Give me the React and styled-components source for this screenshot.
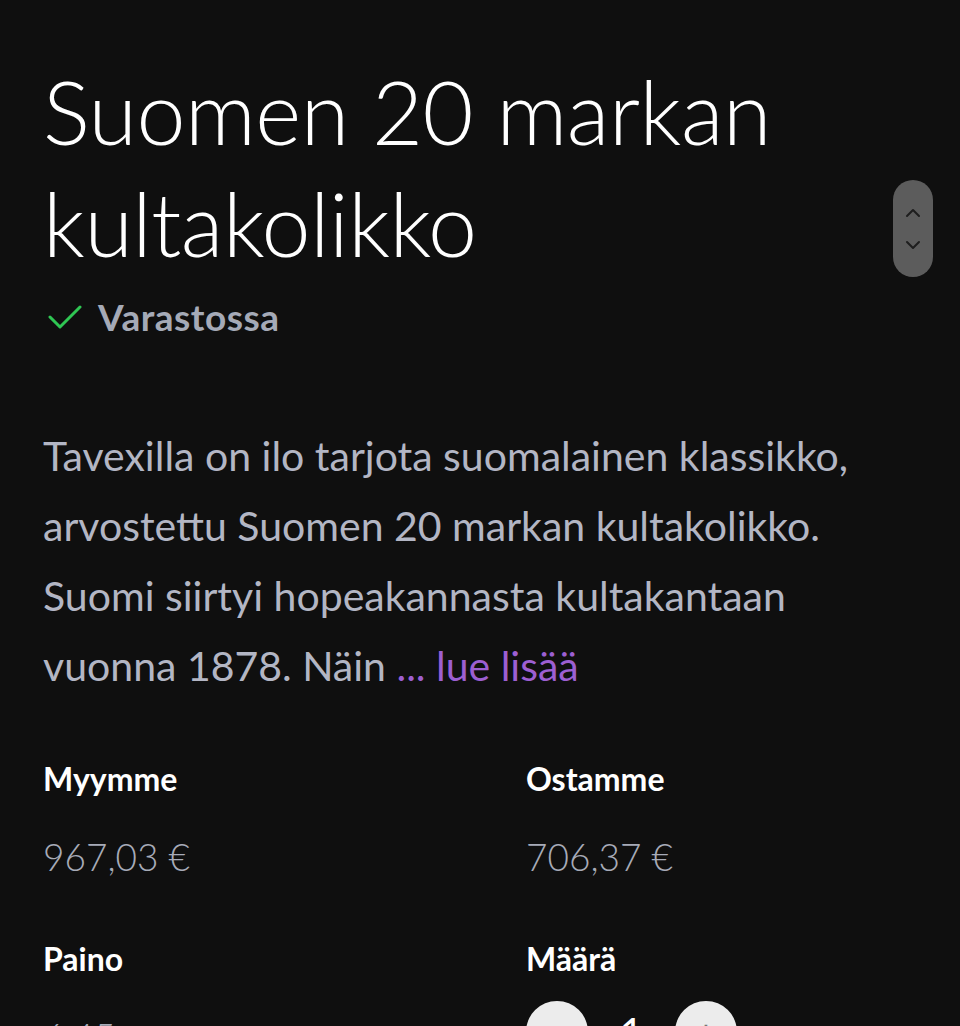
import React from "react";
import styled, { createGlobalStyle } from "styled-components";

const Global = createGlobalStyle`
  html, body { margin: 0; padding: 0; background: #0f0f0f; }
  body { font-family: Lato, "Noto Sans", sans-serif; color: #fff; overflow: hidden; }
`;

const Page = styled.div`
  position: relative;
  width: 960px;
  height: 1026px;
  overflow: hidden;
  background: #0f0f0f;
  box-sizing: border-box;
  padding: 55px 43px 0 43px;
`;

const Title = styled.h1`
  margin: 0;
  font-weight: 300;
  font-size: 88px;
  line-height: 112px;
  color: #ffffff;
  letter-spacing: -0.5px;
`;

const Stock = styled.div`
  display: flex;
  align-items: center;
  gap: 16px;
  margin-top: 16px;
  padding-left: 5px;
  font-size: 37px;
  font-weight: 700;
  letter-spacing: 0.5px;
  color: #a5aab7;
  line-height: 44px;
`;

const Description = styled.p`
  margin: 82px 0 0 0;
  font-size: 41px;
  line-height: 70px;
  font-weight: 400;
  color: #b3b6c4;
`;

const More = styled.span`
  color: #9d5fd2;
`;

const Grid = styled.div`
  display: grid;
  grid-template-columns: 483px 1fr;
  row-gap: 59px;
  margin-top: 58px;
`;

const Cell = styled.div`
  display: flex;
  flex-direction: column;
  gap: ${(p) => (p.$tight ? "22px" : "35px")};
`;

const Label = styled.div`
  font-size: 32px;
  font-weight: 700;
  line-height: 40px;
  color: #ffffff;
`;

const Value = styled.div`
  font-size: 37px;
  font-weight: 300;
  line-height: 46px;
  color: #a7abb8;
`;

const Stepper = styled.div`
  display: flex;
  align-items: center;
`;

const RoundButton = styled.button`
  width: 62px;
  height: 62px;
  border-radius: 50%;
  border: none;
  background: #ececec;
  color: #777;
  font-size: 36px;
  font-family: inherit;
  padding: 0;
  display: flex;
  align-items: center;
  justify-content: center;
`;

const Qty = styled.span`
  width: 87px;
  text-align: center;
  font-size: 40px;
  color: #fff;
`;

const Scroller = styled.div`
  position: absolute;
  left: 893px;
  top: 180px;
  width: 40px;
  height: 97px;
  border-radius: 20px;
  background: #5c5c5c;
  display: flex;
  flex-direction: column;
  align-items: center;
  justify-content: center;
  gap: 22px;
`;

const Chevron = ({ up }) => (
  <svg width="16" height="10" viewBox="0 0 16 10">
    <path
      d={up ? "M2 8 L8 2 L14 8" : "M2 2 L8 8 L14 2"}
      fill="none"
      stroke="#1e1e1e"
      strokeWidth="2"
      strokeLinecap="round"
      strokeLinejoin="round"
    />
  </svg>
);

const Check = () => (
  <svg width="34" height="26" viewBox="0 0 34 26">
    <path d="M2 13 L12 23 L32 3" fill="none" stroke="#2fc653" strokeWidth="3" strokeLinecap="round" strokeLinejoin="round" />
  </svg>
);

export default function App() {
  return (
    <>
      <Global />
      <Page>
        <Title>
          Suomen 20 markan
          <br />
          kultakolikko
        </Title>
        <Stock>
          <Check />
          Varastossa
        </Stock>
        <Description>
          Tavexilla on ilo tarjota suomalainen klassikko, arvostettu Suomen 20 markan kultakolikko.
          Suomi siirtyi hopeakannasta kultakantaan vuonna 1878. Näin <More>... lue lisää</More>
        </Description>
        <Grid>
          <Cell>
            <Label>Myymme</Label>
            <Value>967,03 €</Value>
          </Cell>
          <Cell>
            <Label>Ostamme</Label>
            <Value>706,37 €</Value>
          </Cell>
          <Cell>
            <Label>Paino</Label>
            <Value>6,45 g</Value>
          </Cell>
          <Cell $tight>
            <Label>Määrä</Label>
            <Stepper>
              <RoundButton>−</RoundButton>
              <Qty>1</Qty>
              <RoundButton>+</RoundButton>
            </Stepper>
          </Cell>
        </Grid>
        <Scroller>
          <Chevron up />
          <Chevron />
        </Scroller>
      </Page>
    </>
  );
}
